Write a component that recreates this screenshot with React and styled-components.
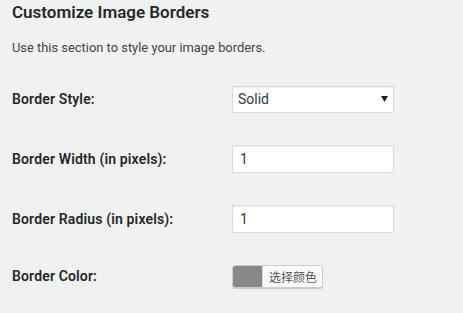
import React from "react";
import styled, { createGlobalStyle } from "styled-components";

const Global = createGlobalStyle`
  html, body { margin: 0; padding: 0; background: #f1f1f1; }
  body {
    font-family: Roboto, "Noto Sans CJK SC", sans-serif;
    color: #23282d;
    font-size: 13px;
  }
`;

const Page = styled.div`
  padding: 0 12px;
  width: 463px;
  height: 313px;
  box-sizing: border-box;
`;

const Title = styled.h2`
  margin: 0;
  font-size: 17px;
  font-weight: 600;
  line-height: 24px;
  color: #23282d;
`;

const Desc = styled.p`
  margin: 15px 0 0;
  font-size: 12.9px;
  line-height: 18px;
  color: #444;
`;

const Table = styled.div`
  display: flex;
  flex-direction: column;
  margin-top: 12px;
`;

const Row = styled.div`
  display: flex;
  align-items: center;
  height: ${(p) => p.$h || 60}px;
`;

const Label = styled.div`
  width: 220px;
  font-size: 14px;
  letter-spacing: 0.15px;
  font-weight: 600;
  color: #23282d;
`;

const Select = styled.div`
  box-sizing: border-box;
  width: 162px;
  height: 27px;
  background: #fff;
  border: 1px solid #ddd;
  box-shadow: inset 0 1px 2px rgba(0, 0, 0, 0.07);
  display: flex;
  align-items: center;
  justify-content: space-between;
  padding: 0 5px 0 5px;
  font-size: 14px;
  color: #32373c;
`;

const Caret = styled.svg`
  width: 7px;
  height: 6px;
  display: block;
`;

const Input = styled.div`
  box-sizing: border-box;
  width: 162px;
  height: 28px;
  background: #fff;
  border: 1px solid #ddd;
  box-shadow: inset 0 1px 2px rgba(0, 0, 0, 0.07);
  display: flex;
  align-items: center;
  padding: 0 7px;
  font-size: 14px;
  color: #32373c;
`;

const ColorButton = styled.div`
  box-sizing: border-box;
  display: flex;
  align-items: stretch;
  height: 23px;
  border: 1px solid #ccc;
  border-radius: 3px;
  background: #f7f7f7;
  box-shadow: 0 1px 0 #ccc;
  overflow: hidden;
`;

const Swatch = styled.span`
  width: 29px;
  background: ${(p) => p.$color};
`;

const ColorText = styled.span`
  display: flex;
  align-items: center;
  padding: 0 5px 0 6px;
  background: #fafafa;
  border-left: 1px solid #ddd;
  font-size: 12px;
  color: #555;
  font-family: "Noto Sans CJK SC", sans-serif;
`;

export default function App() {
  return (
    <Page>
      <Global />
      <Title>Customize Image Borders</Title>
      <Desc>Use this section to style your image borders.</Desc>
      <Table>
        <Row>
          <Label>Border Style:</Label>
          <Select>
            <span>Solid</span>
            <Caret viewBox="0 0 7 6">
              <path d="M0 0 H7 L3.5 6 Z" fill="#222" />
            </Caret>
          </Select>
        </Row>
        <Row>
          <Label>Border Width (in pixels):</Label>
          <Input>1</Input>
        </Row>
        <Row>
          <Label>Border Radius (in pixels):</Label>
          <Input>1</Input>
        </Row>
        <Row $h={54}>
          <Label>Border Color:</Label>
          <ColorButton>
            <Swatch $color="#888888" />
            <ColorText>选择颜色</ColorText>
          </ColorButton>
        </Row>
      </Table>
    </Page>
  );
}
